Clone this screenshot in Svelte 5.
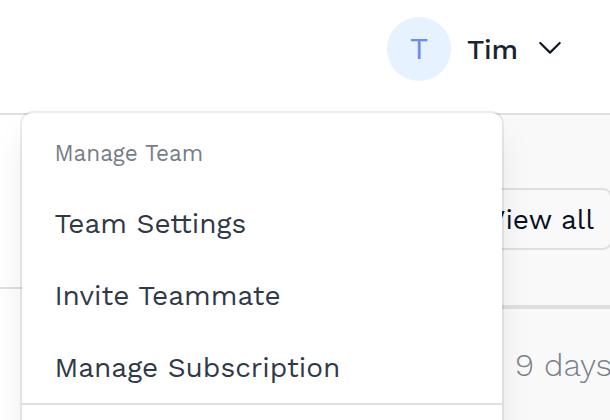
<script>
  const items = ['Team Settings', 'Invite Teammate', 'Manage Subscription'];
</script>

<div class="app">
  <header>
    <div class="avatar">T</div>
    <span class="name">Tim</span>
    <svg class="chevron" width="24" height="16" viewBox="0 0 24 16" fill="none">
      <path d="M2.3 3 12 12.6 21.7 3" stroke="#111827" stroke-width="2.2" stroke-linecap="round" stroke-linejoin="round" />
    </svg>
  </header>
  <div class="body">
    <section class="left"><div class="cell"></div></section>
    <section class="right">
      <div class="toolbar"><button>View all</button></div>
      <div class="days">9 days</div>
    </section>
  </div>

  <nav class="menu">
    <div class="group">
      <div class="title">Manage Team</div>
      {#each items as item}
        <a href="#team">{item}</a>
      {/each}
    </div>
  </nav>
</div>

<style>
  .app {
    position: relative;
    width: 610px;
    height: 420px;
    overflow: hidden;
    background: #fff;
    font-family: 'Work Sans', 'Open Sans', sans-serif;
    display: flex;
    flex-direction: column;
    white-space: nowrap;
  }
  header {
    box-sizing: border-box;
    flex: none;
    height: 115px;
    padding: 17px 48px 0 0;
    border-bottom: 2px solid #dfdfdf;
    display: flex;
    justify-content: flex-end;
    align-items: flex-start;
  }
  .avatar {
    width: 64px;
    height: 64px;
    border-radius: 50%;
    background: #e6f2ff;
    color: #6b8df2;
    font-family: 'Liberation Sans', Arial, sans-serif;
    font-size: 29px;
    line-height: 64px;
    text-align: center;
  }
  .name {
    width: 51px;
    margin-left: 16px;
    color: #1a2332;
    font-size: 28px;
    font-weight: 500;
    line-height: 66px;
  }
  .chevron {
    margin: 23px 0 0 20px;
  }
  .body {
    flex: 1;
    display: flex;
  }
  .left {
    flex: 0 0 450px;
  }
  .cell {
    height: 172px;
    border-bottom: 2px solid #dfdfdf;
  }
  .right {
    flex: 1;
    min-width: 0;
    background: #f9f9f9;
  }
  .toolbar {
    box-sizing: border-box;
    height: 194px;
    padding-top: 73px;
    border-bottom: 4px solid #dfdfdf;
    display: flex;
    justify-content: flex-end;
    align-items: flex-start;
  }
  button {
    box-sizing: border-box;
    height: 62px;
    padding: 1px 16px 0 32px;
    border: 2px solid #dfdfdf;
    border-radius: 9px;
    background: #f9f9f9;
    color: #07111f;
    font: 28px/57px 'Work Sans', 'Open Sans', sans-serif;
    margin-right: -2px;
  }
  .days {
    padding-left: 65px;
    color: #78808c;
    font-size: 32px;
    font-weight: 300;
    line-height: 112px;
  }
  .menu {
    position: absolute;
    left: 22px;
    top: 113px;
    width: 480px;
    height: 400px;
    border-radius: 11px;
    background: #fff;
    box-shadow:
      0 0 0 2px rgba(0, 0, 0, 0.07),
      0 20px 36px -5px rgba(0, 0, 0, 0.1),
      0 8px 12px -4px rgba(0, 0, 0, 0.03);
  }
  .group {
    box-sizing: border-box;
    height: 292px;
    padding: 7px 32.4px 0;
    border-bottom: 2px solid #dfdfdf;
  }
  .title {
    height: 68px;
    color: #767d88;
    font-size: 22.5px;
    line-height: 66px;
  }
  a {
    display: block;
    width: max-content;
    color: #303948;
    font-size: 28px;
    line-height: 72px;
    text-decoration: none;
  }
</style>
